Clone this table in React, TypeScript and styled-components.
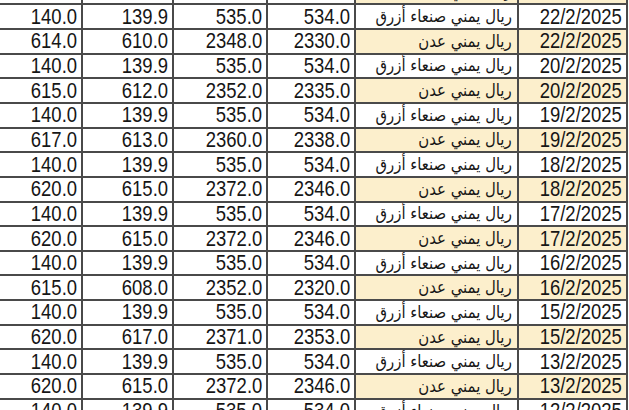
import React from 'react';
import styled, { createGlobalStyle } from 'styled-components';

type Rate = {
  date: string;
  aden: boolean;
  buy: string;
  sell: string;
  buySar: string;
  sellSar: string;
};

const SANAA = 'ريال يمني صنعاء أزرق';
const ADEN = 'ريال يمني عدن';

const sanaa = (date: string): Rate => ({
  date,
  aden: false,
  buy: '534.0',
  sell: '535.0',
  buySar: '139.9',
  sellSar: '140.0',
});

const aden = (date: string, buy: string, sell: string, buySar: string, sellSar: string): Rate => ({
  date,
  aden: true,
  buy,
  sell,
  buySar,
  sellSar,
});

const rates: Rate[] = [
  aden('23/2/2025', '2328.0', '2347.0', '608.0', '612.0'),
  sanaa('22/2/2025'),
  aden('22/2/2025', '2330.0', '2348.0', '610.0', '614.0'),
  sanaa('20/2/2025'),
  aden('20/2/2025', '2335.0', '2352.0', '612.0', '615.0'),
  sanaa('19/2/2025'),
  aden('19/2/2025', '2338.0', '2360.0', '613.0', '617.0'),
  sanaa('18/2/2025'),
  aden('18/2/2025', '2346.0', '2372.0', '615.0', '620.0'),
  sanaa('17/2/2025'),
  aden('17/2/2025', '2346.0', '2372.0', '615.0', '620.0'),
  sanaa('16/2/2025'),
  aden('16/2/2025', '2320.0', '2352.0', '608.0', '615.0'),
  sanaa('15/2/2025'),
  aden('15/2/2025', '2353.0', '2371.0', '617.0', '620.0'),
  sanaa('13/2/2025'),
  aden('13/2/2025', '2346.0', '2372.0', '615.0', '620.0'),
  sanaa('12/2/2025'),
];

const GlobalStyle = createGlobalStyle`
  html, body {
    margin: 0;
    padding: 0;
    background: #ffffff;
    overflow: hidden;
  }
`;

const Viewport = styled.div`
  width: 629px;
  height: 410px;
  overflow: hidden;
  background: #ffffff;
`;

const Sheet = styled.div`
  display: grid;
  grid-template-columns: 91px 91px 94px 88px 163px 109px;
  grid-auto-rows: 24.67px;
  margin: -19.4px 0 0 -8px;
  width: 636px;
  color: #161616;
  font-family: 'Liberation Sans', Arial, sans-serif;
`;

const Cell = styled.div<{ $highlight?: boolean; $arabic?: boolean }>`
  box-sizing: border-box;
  display: flex;
  align-items: center;
  justify-content: flex-end;
  padding-right: ${({ $arabic }) => ($arabic ? '5px' : '4px')};
  border-bottom: 2px solid #4a4a4a;
  border-right: 2px solid #4a4a4a;
  background: ${({ $highlight }) => ($highlight ? '#fcefcc' : '#ffffff')};
  overflow: hidden;
  white-space: nowrap;
`;

const Value = styled.span`
  display: inline-block;
  font-size: 22px;
  line-height: 1;
  transform: scaleX(0.84);
  transform-origin: right center;
`;

const ArabicValue = styled.span`
  direction: rtl;
  font-family: 'DejaVu Sans', sans-serif;
  font-size: 17px;
  line-height: 1;
  display: inline-block;
  transform: scaleX(0.875);
  transform-origin: right center;
`;

export default function App() {
  return (
    <Viewport>
      <GlobalStyle />
      <Sheet>
        {rates.map((r, i) => (
          <React.Fragment key={i}>
            <Cell><Value>{r.sellSar}</Value></Cell>
            <Cell><Value>{r.buySar}</Value></Cell>
            <Cell><Value>{r.sell}</Value></Cell>
            <Cell><Value>{r.buy}</Value></Cell>
            <Cell $highlight={r.aden} $arabic>
              <ArabicValue>{r.aden ? ADEN : SANAA}</ArabicValue>
            </Cell>
            <Cell $highlight={r.aden}><Value>{r.date}</Value></Cell>
          </React.Fragment>
        ))}
      </Sheet>
    </Viewport>
  );
}
